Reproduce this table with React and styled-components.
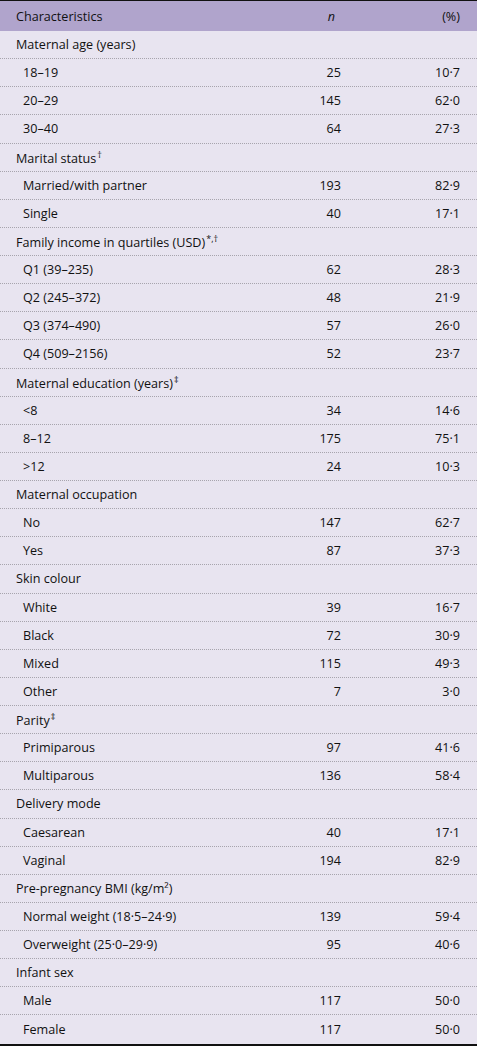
import styled, { createGlobalStyle } from "styled-components";

const GlobalStyle = createGlobalStyle`
	html, body {
		margin: 0;
		padding: 0;
		background: #ffffff;
	}
	body {
		font-family: "Open Sans", "Noto Sans", sans-serif;
	}
`;

const Table = styled.div`
	width: 477px;
	border-top: 1px solid #111;
	border-bottom: 2px solid #111;
	background: #e8e4f0;
	color: #111;
	font-size: 12.6px;
`;

const Row = styled.div`
	display: grid;
	grid-template-columns: 1fr 60px 119px;
	align-items: center;
	box-sizing: border-box;
	height: ${(p) => (p.$head ? "30px" : "28.14px")};
	padding-right: 17px;
	background: ${(p) => (p.$head ? "#b0a4cc" : "transparent")};
	border-bottom: ${(p) => (p.$head || p.$last ? "none" : "1px dotted #a7a4ad")};
`;

const Label = styled.div`
	padding-left: ${(p) => (p.$sub ? "23px" : "16px")};
	white-space: nowrap;
	> sup {
		font-size: 9px;
		vertical-align: 5px;
		margin-left: 1px;
	}
`;

const Num = styled.div`
	text-align: right;
	padding-right: ${(p) => (p.$pad ? "6px" : "0")};
	font-style: ${(p) => (p.$italic ? "italic" : "normal")};
`;

const rows = [
	["Maternal age (years)"],
	["18–19", "25", "10·7"],
	["20–29", "145", "62·0"],
	["30–40", "64", "27·3"],
	["Marital status", null, null, "†"],
	["Married/with partner", "193", "82·9"],
	["Single", "40", "17·1"],
	["Family income in quartiles (USD)", null, null, "*,†"],
	["Q1 (39–235)", "62", "28·3"],
	["Q2 (245–372)", "48", "21·9"],
	["Q3 (374–490)", "57", "26·0"],
	["Q4 (509–2156)", "52", "23·7"],
	["Maternal education (years)", null, null, "‡"],
	["<8", "34", "14·6"],
	["8–12", "175", "75·1"],
	[">12", "24", "10·3"],
	["Maternal occupation"],
	["No", "147", "62·7"],
	["Yes", "87", "37·3"],
	["Skin colour"],
	["White", "39", "16·7"],
	["Black", "72", "30·9"],
	["Mixed", "115", "49·3"],
	["Other", "7", "3·0"],
	["Parity", null, null, "‡"],
	["Primiparous", "97", "41·6"],
	["Multiparous", "136", "58·4"],
	["Delivery mode"],
	["Caesarean", "40", "17·1"],
	["Vaginal", "194", "82·9"],
	["Pre-pregnancy BMI (kg/m²)"],
	["Normal weight (18·5–24·9)", "139", "59·4"],
	["Overweight (25·0–29·9)", "95", "40·6"],
	["Infant sex"],
	["Male", "117", "50·0"],
	["Female", "117", "50·0"],
];

const App = () => {
	return (
		<>
			<GlobalStyle />
			<Table>
				<Row $head>
					<Label>Characteristics</Label>
					<Num $italic $pad>
						n
					</Num>
					<Num>(%)</Num>
				</Row>
				{rows.map(([label, n, pct, note], i) => {
					const sub = n != null;
					return (
						<Row key={i} $last={i === rows.length - 1}>
							<Label $sub={sub}>
								{label}
								{note && <sup>{note}</sup>}
							</Label>
							<Num>{n}</Num>
							<Num>{pct}</Num>
						</Row>
					);
				})}
			</Table>
		</>
	);
};

export default App;
